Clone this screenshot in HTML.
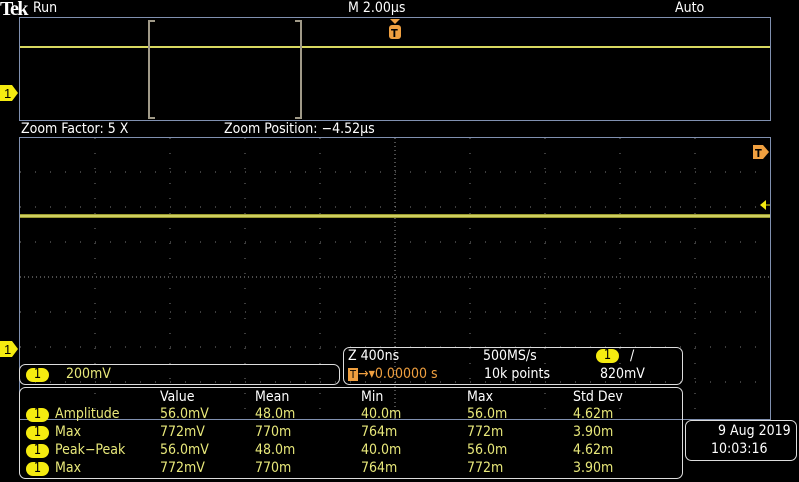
<!DOCTYPE html>
<html><head><style>
body{margin:0;background:#000;width:799px;height:482px;overflow:hidden;position:relative;font-family:"DejaVu Sans Condensed","Liberation Sans",sans-serif;}
.t{position:absolute;white-space:nowrap;font-size:14px;line-height:15px;}
.w{color:#fff}.y{color:#e8e87a}.o{color:#f0a040}
.b{position:absolute;background:#f5eb10;color:#000;border-radius:8px;width:23px;height:14px;font-size:13px;line-height:14px;text-align:center}
</style></head><body>
<svg width="799" height="482" style="position:absolute;left:0;top:0">
<rect x="19.5" y="17.5" width="751" height="103" fill="none" stroke="#8090b0"/>
<rect x="19.5" y="137.5" width="751" height="282" fill="none" stroke="#8090b0"/>
<g stroke="#7a7a7a" stroke-width="1" stroke-dasharray="1 14">
<line x1="95" y1="138" x2="95" y2="419"/><line x1="170" y1="138" x2="170" y2="419"/><line x1="245" y1="138" x2="245" y2="419"/><line x1="320" y1="138" x2="320" y2="419"/><line x1="470" y1="138" x2="470" y2="419"/><line x1="545" y1="138" x2="545" y2="419"/><line x1="620" y1="138" x2="620" y2="419"/><line x1="695" y1="138" x2="695" y2="419"/>
<line x1="20" y1="172" x2="770" y2="172"/><line x1="20" y1="207" x2="770" y2="207"/><line x1="20" y1="242" x2="770" y2="242"/><line x1="20" y1="312" x2="770" y2="312"/><line x1="20" y1="347" x2="770" y2="347"/><line x1="20" y1="382" x2="770" y2="382"/>
</g>
<g stroke="#9a9a9a" stroke-dasharray="1 3">
<line x1="395" y1="138" x2="395" y2="419"/><line x1="20" y1="277" x2="770" y2="277"/>
</g>
<line x1="20" y1="47" x2="770" y2="47" stroke="#d8d860" stroke-width="2"/>
<line x1="20" y1="216" x2="770" y2="216" stroke="#9a9a30" stroke-width="4"/>
<line x1="20" y1="216" x2="770" y2="216" stroke="#e0e070" stroke-width="1.5"/>
<path d="M155 21h-6v97h6M295 21h6v97h-6" fill="none" stroke="#a09a88" stroke-width="2"/>
<path d="M0 85h12l6 8-6 8H0z" fill="#f5eb10"/><text x="4" y="98" font-size="13" fill="#000" font-family="Liberation Sans">1</text>
<path d="M0 341h12l6 8-6 8H0z" fill="#f5eb10"/><text x="4" y="354" font-size="13" fill="#000" font-family="Liberation Sans">1</text>
<path d="M390 19h10l-5 5z" fill="#f0a040"/><rect x="389" y="25" width="12" height="14" rx="3" fill="#f0a040"/><text x="391" y="37" font-size="11" font-weight="bold" fill="#000">T</text>
<path d="M753 145h10l6 7-6 7h-10z" fill="#f0a040"/><text x="755" y="157" font-size="11" font-weight="bold" fill="#000">T</text>
<path d="M760 205l6-5v10z" fill="#f5eb10"/><line x1="765" y1="205" x2="770" y2="205" stroke="#f5eb10"/>
<g fill="none" stroke="#ddd" stroke-width="1">
<rect x="19.5" y="364.5" width="320" height="20" rx="6"/>
<rect x="343.5" y="347.5" width="339" height="37" rx="6"/>
<rect x="19.5" y="387.5" width="663" height="91" rx="6"/>
<rect x="685.5" y="420.5" width="111" height="40" rx="6"/>
</g>
</svg>
<div class="t w" style="left:0;top:-1px;font-family:'Liberation Serif',serif;font-weight:bold;font-size:20px;line-height:20px;letter-spacing:-1.5px">Tek</div>
<div class="t w" style="left:33px;top:1px">Run</div>
<div class="t w" style="left:348px;top:1px">M 2.00µs</div>
<div class="t w" style="left:675px;top:1px">Auto</div>
<div class="t w" style="left:21px;top:122px">Zoom Factor: 5 X</div>
<div class="t w" style="left:224px;top:122px">Zoom Position: −4.52µs</div>
<div class="b" style="left:26px;top:368px">1</div><div class="t y" style="left:66px;top:367px">200mV</div>
<div class="t w" style="left:348px;top:349px">Z 400ns</div>
<div class="t w" style="left:483px;top:349px">500MS/s</div>
<div class="b" style="left:596px;top:349px">1</div><div class="t w" style="left:630px;top:349px">/</div>
<div class="t o" style="left:348px;top:367px"><span style="background:#f0a040;color:#000;font-size:11px;padding:0 2px">T</span>→▾0.00000 s</div>
<div class="t w" style="left:484px;top:367px">10k points</div>
<div class="t w" style="left:600px;top:367px">820mV</div>
<div class="t w" style="left:160px;top:390px">Value</div><div class="t w" style="left:255px;top:390px">Mean</div><div class="t w" style="left:361px;top:390px">Min</div><div class="t w" style="left:467px;top:390px">Max</div><div class="t w" style="left:573px;top:390px">Std Dev</div>
<div class="b" style="left:26px;top:408px">1</div><div class="t y" style="left:55px;top:407px">Amplitude</div><div class="t y" style="left:160px;top:407px">56.0mV</div><div class="t y" style="left:255px;top:407px">48.0m</div><div class="t y" style="left:361px;top:407px">40.0m</div><div class="t y" style="left:467px;top:407px">56.0m</div><div class="t y" style="left:573px;top:407px">4.62m</div>
<div class="b" style="left:26px;top:426px">1</div><div class="t y" style="left:55px;top:425px">Max</div><div class="t y" style="left:160px;top:425px">772mV</div><div class="t y" style="left:255px;top:425px">770m</div><div class="t y" style="left:361px;top:425px">764m</div><div class="t y" style="left:467px;top:425px">772m</div><div class="t y" style="left:573px;top:425px">3.90m</div>
<div class="b" style="left:26px;top:444px">1</div><div class="t y" style="left:55px;top:443px">Peak−Peak</div><div class="t y" style="left:160px;top:443px">56.0mV</div><div class="t y" style="left:255px;top:443px">48.0m</div><div class="t y" style="left:361px;top:443px">40.0m</div><div class="t y" style="left:467px;top:443px">56.0m</div><div class="t y" style="left:573px;top:443px">4.62m</div>
<div class="b" style="left:26px;top:462px">1</div><div class="t y" style="left:55px;top:461px">Max</div><div class="t y" style="left:160px;top:461px">772mV</div><div class="t y" style="left:255px;top:461px">770m</div><div class="t y" style="left:361px;top:461px">764m</div><div class="t y" style="left:467px;top:461px">772m</div><div class="t y" style="left:573px;top:461px">3.90m</div>
<div class="t w" style="left:718px;top:424px">9 Aug 2019</div>
<div class="t w" style="left:711px;top:442px">10:03:16</div>
</body></html>
